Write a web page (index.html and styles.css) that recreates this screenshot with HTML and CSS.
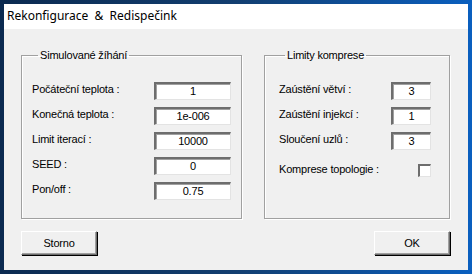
FILE: index.html
```html
<!DOCTYPE html>
<html lang="cs">
<head>
    <meta charset="UTF-8">
    <meta name="viewport" content="width=device-width, initial-scale=1.0">
    <link rel="stylesheet" href="styles.css">
    <title>Rekonfigurace &amp; Redispečink</title>
</head>
<body>
    <div class="window">
        <div class="titlebar">Rekonfigurace  &amp;  Redispečink</div>
        <div class="content">
            <div class="groups">
                <fieldset class="group group-left">
                    <legend>Simulované žíhání</legend>
                    <div class="row"><span>Počáteční teplota :</span><div class="field wide">1</div></div>
                    <div class="row"><span>Konečná teplota :</span><div class="field wide">1e-006</div></div>
                    <div class="row"><span>Limit iterací :</span><div class="field wide">10000</div></div>
                    <div class="row"><span>SEED :</span><div class="field wide">0</div></div>
                    <div class="row"><span>Pon/off :</span><div class="field wide">0.75</div></div>
                </fieldset>
                <fieldset class="group group-right">
                    <legend>Limity komprese</legend>
                    <div class="row"><span>Zaústění větví :</span><div class="field narrow">3</div></div>
                    <div class="row"><span>Zaústění injekcí :</span><div class="field narrow">1</div></div>
                    <div class="row"><span>Sloučení uzlů :</span><div class="field narrow">3</div></div>
                    <div class="row check-row"><span>Komprese topologie :</span><div class="checkbox"></div></div>
                </fieldset>
            </div>
            <div class="buttons">
                <button type="button" class="btn">Storno</button>
                <button type="button" class="btn">OK</button>
            </div>
        </div>
    </div>
</body>
</html>
```

FILE: styles.css
```css
* {
    margin: 0;
    padding: 0;
    box-sizing: border-box;
}
body {
    width: 472px;
    height: 274px;
    font-family: "Liberation Sans", Arial, sans-serif;
    font-size: 11px;
    letter-spacing: -0.2px;
    color: #000;
    overflow: hidden;
}
.window {
    width: 472px;
    height: 274px;
    padding: 4px;
    background: linear-gradient(90deg, #0b2a50 0%, #123e70 50%, #0a5fbf 100%);
    display: flex;
    flex-direction: column;
}
.titlebar {
    height: 25px;
    background: #fff;
    padding-left: 3px;
    line-height: 24px;
    font-family: "Noto Sans", sans-serif;
    font-size: 12px;
    letter-spacing: 0;
    white-space: pre;
}
.content {
    flex: 1;
    background: #f0f0f0;
    padding: 20px 18px 0 17px;
}
.groups {
    display: flex;
    justify-content: space-between;
}
.group {
    border: 1px solid #a0a0a0;
    box-shadow: 1px 1px 0 #fff, inset 1px 1px 0 #fff;
    height: 170px;
}
.group legend {
    margin-left: 6px;
    padding: 0 2px 0 2px;
    font-size: 11px;
}
.group-left {
    width: 221px;
    padding: 17px 10px 0 10px;
}
.group-right {
    width: 186px;
    padding: 17px 18px 0 14px;
}
.row {
    height: 25px;
    display: flex;
    align-items: center;
    justify-content: space-between;
}
.row span {
    margin-top: -3px;
}
.field {
    height: 18px;
    background: #fff;
    text-align: center;
    line-height: 15px;
    border-top: 2px solid #6d6d6d;
    border-left: 2px solid #6d6d6d;
    border-right: 1px solid #e3e3e3;
    border-bottom: 1px solid #e3e3e3;
    box-shadow: inset 1px 1px 0 #a0a0a0;
}
.wide {
    width: 77px;
}
.narrow {
    width: 40px;
}
.check-row {
    margin-top: 5px;
}
.checkbox {
    width: 13px;
    height: 13px;
    background: #fff;
    border-top: 2px solid #6d6d6d;
    border-left: 2px solid #6d6d6d;
    border-right: 1px solid #e3e3e3;
    border-bottom: 1px solid #e3e3e3;
}
.buttons {
    margin-top: 12px;
    display: flex;
    justify-content: space-between;
}
.btn {
    width: 76px;
    height: 24px;
    background: #f0f0f0;
    font-family: "Liberation Sans", Arial, sans-serif;
    font-size: 11px;
    font-weight: normal;
    letter-spacing: -0.2px;
    color: #000;
    border-top: 1px solid #fff;
    border-left: 1px solid #fff;
    border-right: 1px solid #6d6d6d;
    border-bottom: 1px solid #6d6d6d;
    box-shadow: inset -1px -1px 0 #a0a0a0, 1px 1px 0 #000;
}
```
